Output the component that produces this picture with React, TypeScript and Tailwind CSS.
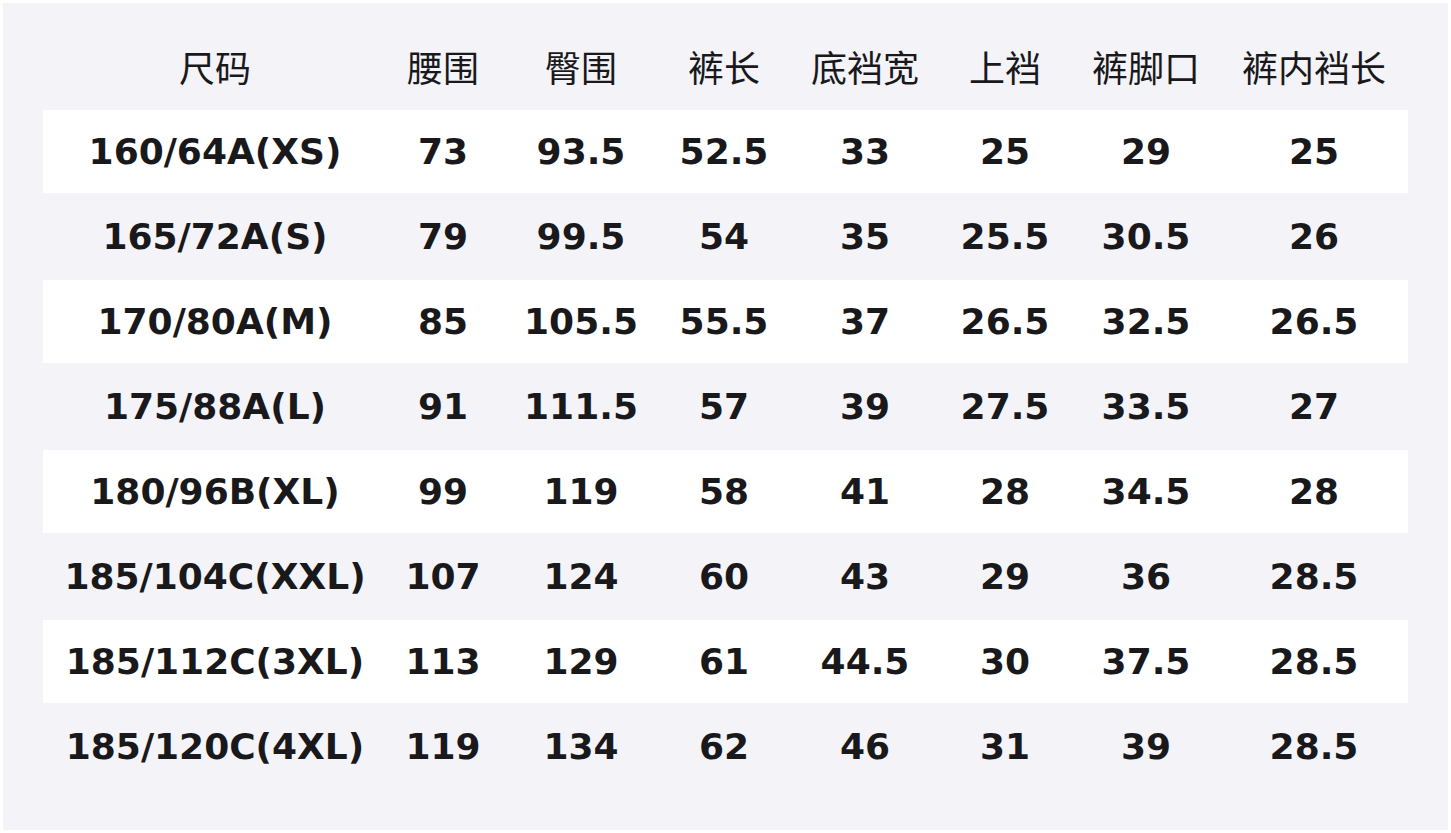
const headers = ["尺码", "腰围", "臀围", "裤长", "底裆宽", "上裆", "裤脚口", "裤内裆长"];

const rows: string[][] = [
  ["160/64A(XS)", "73", "93.5", "52.5", "33", "25", "29", "25"],
  ["165/72A(S)", "79", "99.5", "54", "35", "25.5", "30.5", "26"],
  ["170/80A(M)", "85", "105.5", "55.5", "37", "26.5", "32.5", "26.5"],
  ["175/88A(L)", "91", "111.5", "57", "39", "27.5", "33.5", "27"],
  ["180/96B(XL)", "99", "119", "58", "41", "28", "34.5", "28"],
  ["185/104C(XXL)", "107", "124", "60", "43", "29", "36", "28.5"],
  ["185/112C(3XL)", "113", "129", "61", "44.5", "30", "37.5", "28.5"],
  ["185/120C(4XL)", "119", "134", "62", "46", "31", "39", "28.5"],
];

const grid = "grid grid-cols-[344px_112px_164px_122px_160px_120px_162px_174px]";

export default function App() {
  return (
    <div className="w-[1451px] h-[833px] bg-white p-[3px] font-['DejaVu_Sans','Noto_Sans_CJK_SC',sans-serif] text-[#19191c]">
      <div className="w-full h-full bg-[#f3f3f8] px-[40px] pt-[22px]">
        <div className={`${grid} h-[85px] items-center pb-[3px] text-[36px]`}>
          {headers.map((h) => (
            <div key={h} className="text-center font-['Noto_Sans_CJK_SC',sans-serif] font-normal">
              {h}
            </div>
          ))}
        </div>
        {rows.map((r, i) => (
          <div
            key={r[0]}
            className={`${grid} h-[85px] items-center border-b-2 border-transparent bg-clip-padding text-[36px] font-bold ${
              i % 2 === 0 ? "bg-white" : ""
            }`}
          >
            {r.map((c, j) => (
              <div key={j} className="text-center whitespace-nowrap">
                {c}
              </div>
            ))}
          </div>
        ))}
      </div>
    </div>
  );
}
